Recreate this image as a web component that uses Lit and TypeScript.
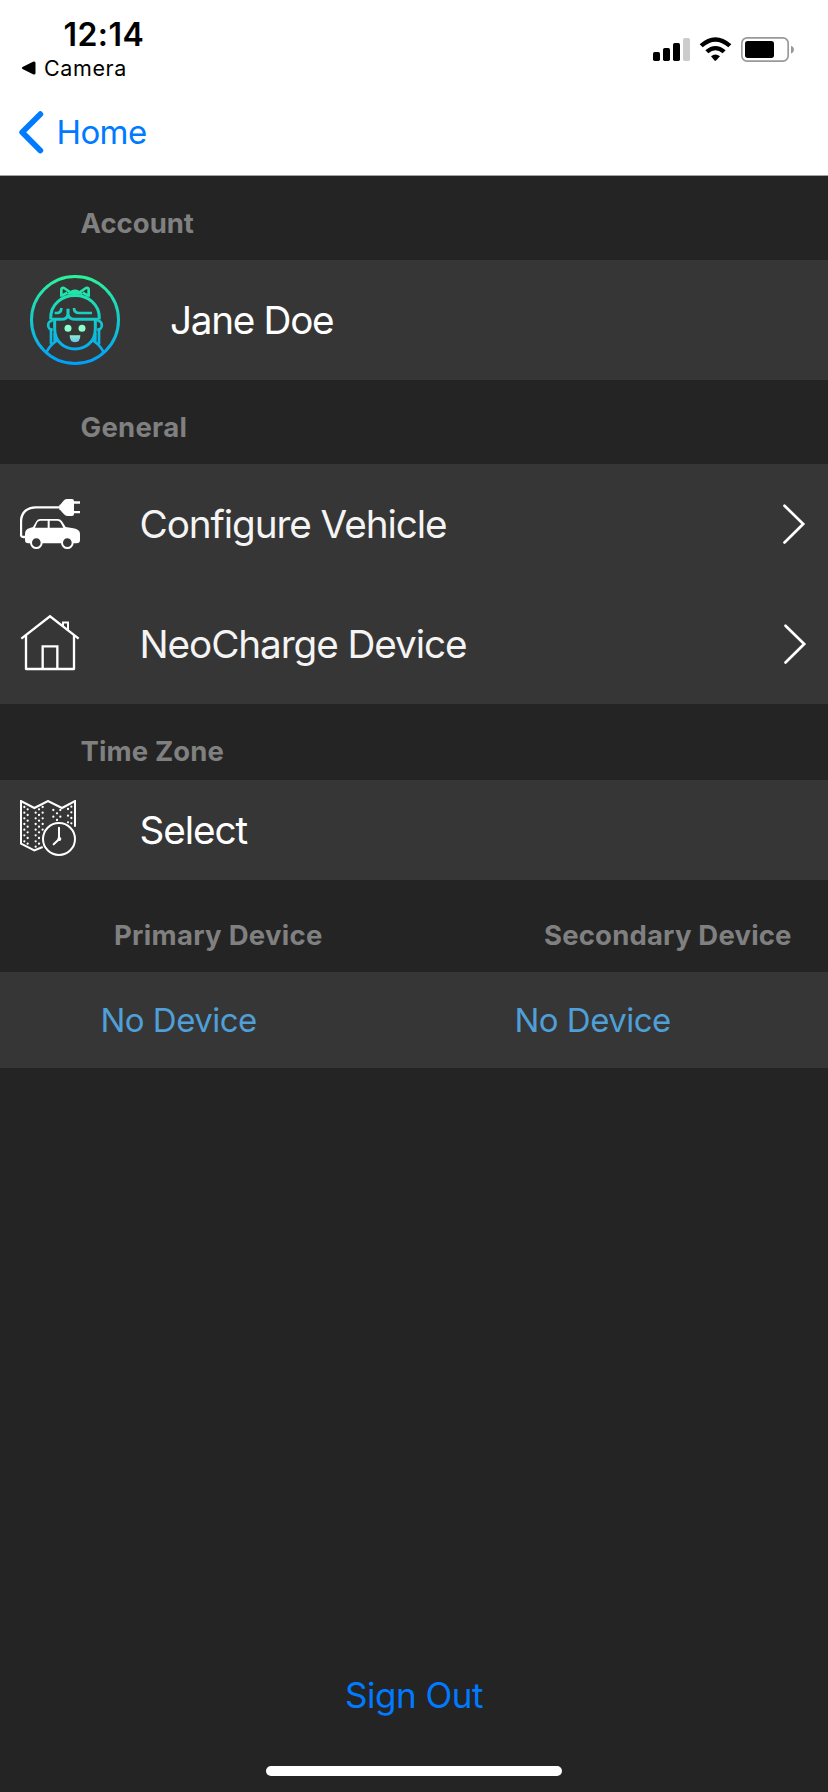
import { LitElement, html, css, svg } from "lit";
import { customElement } from "lit/decorators.js";

const dots: [number, number][] = [
  [43, 81], [53, 88], [43, 98], [53, 105], [43, 115], [53, 122], [43, 132], [53, 140],
  [43, 149], [53, 157], [43, 166], [53, 174], [43, 184], [53, 191],
  [98, 81], [87, 88], [77, 98], [98, 98], [87, 105], [77, 115], [98, 115], [87, 122], [77, 132],
  [98, 132], [87, 140], [77, 149], [98, 149], [87, 157], [77, 166], [87, 174], [77, 184], [87, 191], [77, 200],
  [130, 90], [151, 90], [141, 100], [130, 110], [151, 110], [141, 120],
  [184, 80], [174, 87], [184, 97], [174, 107], [184, 114], [174, 127], [184, 130],
];

const signalIcon = html`
  <svg class="signal" viewBox="93 99 435 93" aria-hidden="true">
    <rect x="99" y="156" width="21" height="27" rx="5" />
    <rect x="129" y="144" width="21" height="39" rx="5" />
    <rect x="159" y="129" width="21" height="54" rx="5" />
    <rect x="189" y="114" width="21" height="69" rx="5" fill="#cccccc" />
    <path d="M239 133Q286 91 334 133L325 142Q286 108 248 142Z" />
    <path d="M256 151Q286 125 317 151L308 160Q286 142 265 160Z" />
    <path d="M273 169Q286 158 300 169L289 181Q286 184 283 181Z" />
    <rect x="365.5" y="113.500" width="139" height="70" rx="16" fill="none" stroke="#999999" stroke-width="5" />
    <rect x="375" y="123" width="87" height="51" rx="8" />
    <path d="M513 137Q522 140 522 149Q522 157 513 161Z" fill="#999999" />
  </svg>`;

const avatarIcon = html`
  <svg class="avatar" viewBox="30 30 270 270" aria-hidden="true">
    <defs>
      <linearGradient id="ring" gradientUnits="userSpaceOnUse" x1="0" y1="30" x2="0" y2="300">
        <stop offset="0" stop-color="#2af598" />
        <stop offset="1" stop-color="#009efd" />
      </linearGradient>
      <linearGradient id="smile" gradientUnits="userSpaceOnUse" x1="0" y1="208" x2="0" y2="233">
        <stop offset="0" stop-color="#8cf5c4" />
        <stop offset="1" stop-color="#6fbcf5" />
      </linearGradient>
    </defs>
    <g fill="none" stroke="url(#ring)" stroke-width="9" stroke-linejoin="round">
      <circle cx="165" cy="165" r="130.500" />
      <path d="M92 163C88 68 242 68 238 163" />
      <path d="M124 95V75Q124 66 132 69L150 81M206 95V75Q206 66 198 69L180 81M126 92L142 83M204 92L188 83" stroke-width="8" />
      <path d="M144 87Q165 66 186 87Z" fill="url(#ring)" stroke-width="5" />
      <path d="M94 163H122Q144 163 144 146V131M144 146Q144 163 169 163H236" />
      <path d="M104 144H110Q124 144 124 129M162 129Q162 144 178 144H216" stroke-width="8" />
      <path d="M104 163V191C104 272 226 272 226 191V163" />
      <path d="M98 167C80 167 80 194 98 194M232 167C250 167 250 194 232 194" stroke-width="8" />
      <path d="M93 190V238M237 190V238M104 205V229M226 205V229M80 260C87 247 94 236 112 226M250 260C243 247 236 236 218 226" stroke-width="8" />
    </g>
    <circle cx="144" cy="190" r="10.500" fill="#8bffce" />
    <circle cx="186" cy="190" r="10.500" fill="#8bffce" />
    <path d="M149 211H181Q181 232 165 232T149 211Z" fill="url(#smile)" />
  </svg>`;

const carIcon = html`
  <svg class="icon" viewBox="30 42 180 180" aria-hidden="true">
    <path d="M48 171H40Q33 171 33 164V126C33 98 51 82 77 82H152" fill="none" stroke="#fff" stroke-width="7" />
    <path d="M148 75Q153 73 155 69L162 61Q166 57 172 57H186Q192 57 192 63V102Q192 108 186 108H172Q166 108 162 103L155 95Q153 91 148 89Z" fill="#fff" />
    <path d="M191 67.500H210M191 96.500H210" stroke="#fff" stroke-width="7" />
    <path fill="#fff" fill-rule="evenodd" d="M45 162Q45 147 60 144L69 141L79 124Q83 117 91 117H143Q151 117 156 124L167 141L190 145Q210 149 210 161V181Q210 190 200 190H55Q45 190 45 180ZM75 143H113V122H91Q85 122 82 127ZM119 143H160L152 128Q148 122 142 122H119Z" />
    <circle cx="79" cy="188" r="16" fill="#363636" stroke="#fff" stroke-width="6" />
    <circle cx="172" cy="188" r="16" fill="#363636" stroke="#fff" stroke-width="6" />
  </svg>`;

const houseIcon = html`
  <svg class="icon" viewBox="30 42 180 180" aria-hidden="true">
    <g fill="none" stroke="#fff" stroke-width="7">
      <path d="M34 116L120 49L206 116" />
      <path d="M48 106V207H192V106" stroke-linejoin="round" />
      <path d="M98 207V139H142V207" />
      <path d="M159 78V67.500H174V91" stroke-width="6" />
    </g>
  </svg>`;

const zoneIcon = html`
  <svg class="icon" viewBox="30 60 180 180" aria-hidden="true">
    <path d="M98 201L73 211L33 191V63L73 84L114 63L156 84L195 63V140" fill="none" stroke="#fff" stroke-width="6" />
    ${dots.map(([x, y]) => svg`<circle cx=${x} cy=${y} r="3.4" fill="#fff" />`)}
    <circle cx="147" cy="177" r="53" fill="#363636" />
    <circle cx="147" cy="177" r="48" fill="none" stroke="#fff" stroke-width="6" />
    <path d="M147 143V178L131 193" fill="none" stroke="#fff" stroke-width="6" stroke-linecap="round" />
    <circle cx="148" cy="177" r="6" fill="#fff" />
  </svg>`;

const chevron = html`
  <svg class="chevron" viewBox="0 0 24 44" aria-hidden="true">
    <path d="M2.500 3.700L21.200 22L2.500 40.500" fill="none" stroke="#fff" stroke-width="2.700" stroke-linecap="round" />
  </svg>`;

@customElement("app-root")
export class AppRoot extends LitElement {
  static styles = css`
    :host {
      display: flex;
      flex-direction: column;
      width: 828px;
      height: 1792px;
      overflow: hidden;
      background: #242424;
      font-family: Inter, "Liberation Sans", sans-serif;
      color: #f4f4f4;
      white-space: nowrap;
    }
    svg { display: block; flex: none; }
    .top {
      box-sizing: border-box;
      height: 176px;
      background: #fff;
      color: #000;
      border-bottom: 1px solid #a2a2a2;
    }
    .status { display: flex; justify-content: space-between; height: 88px; }
    .clock { display: flex; flex-direction: column; padding-top: 14px; }
    .time { padding-left: 63.5px; font-size: 32px; font-weight: 600; line-height: 41px; letter-spacing: 0.45px; }
    .back-app { display: flex; align-items: center; gap: 8px; height: 26px; padding-left: 21px; font-size: 21.5px; letter-spacing: 0.6px; }
    .triangle { width: 15px; height: 14px; }
    .signal { width: 145px; height: 31px; margin: 33px 32px 0 0; }
    .nav { display: flex; align-items: center; height: 88px; padding-left: 18px; color: #007aff; font-size: 33px; letter-spacing: -0.6px; }
    .back { width: 26px; height: 44px; margin-right: 12.5px; }
    .section {
      box-sizing: border-box;
      display: flex;
      align-items: center;
      height: 84px;
      padding: 10px 0 0 80.5px;
      color: #808080;
      font-size: 27.5px;
      font-weight: 700;
      letter-spacing: 0.27px;
    }
    .zone { height: 76px; padding-top: 18px; letter-spacing: 0.12px; }
    .account { letter-spacing: 0; }
    .devices { height: 92px; padding: 18px 0 0; }
    .row { display: flex; align-items: center; height: 120px; background: #363636; font-size: 38.7px; }
    .profile { padding-left: 30px; color: #fff; letter-spacing: -1.3px; }
    .avatar { width: 90px; height: 90px; margin-right: 50px; }
    .item { padding-left: 20px; letter-spacing: -1.09px; }
    .icon { width: 60px; height: 60px; margin-right: 59.5px; }
    .chevron { width: 24px; height: 44px; margin: 0 22px 0 auto; }
    .item + .item .chevron { margin-right: 21px; }
    .short { height: 100px; color: #fff; }
    .pair { height: 96px; color: #4f9fd8; font-size: 33px; letter-spacing: -0.53px; }
    .devices, .pair { display: grid; grid-template-columns: 1fr 1fr; }
    .primary { padding-left: 114px; letter-spacing: 0.28px; }
    .secondary { padding-left: 130px; letter-spacing: 0.18px; }
    .first { padding-left: 100.5px; }
    .second { padding-left: 100.5px; }
    .footer { margin-top: auto; display: flex; flex-direction: column; align-items: center; }
    .signout { color: #007aff; font-size: 35px; line-height: 44px; letter-spacing: -0.48px; margin-bottom: 49px; }
    .indicator { width: 296px; height: 10px; border-radius: 5px; background: #fff; margin-bottom: 16px; }
  `;

  render() {
    return html`
      <header class="top">
        <div class="status">
          <div class="clock">
            <div class="time">12:14</div>
            <div class="back-app">
              <svg class="triangle" viewBox="0 0 15 14" aria-hidden="true">
                <path d="M1.500 6L12.500 0.500Q14.500 0 14.500 2V12Q14.500 14 12.500 13.500L1.500 8Q0 7 1.500 6Z" />
              </svg>
              <span>Camera</span>
            </div>
          </div>
          ${signalIcon}
        </div>
        <nav class="nav">
          <svg class="back" viewBox="0 0 26 44" aria-hidden="true">
            <path d="M22.300 4.200L4.200 22.200L22.300 40.500" fill="none" stroke="#007aff" stroke-width="5.800" stroke-linecap="round" stroke-linejoin="round" />
          </svg>
          <span>Home</span>
        </nav>
      </header>
      <div class="section account">Account</div>
      <div class="row profile">${avatarIcon}<span>Jane Doe</span></div>
      <div class="section">General</div>
      <div class="row item">${carIcon}<span>Configure Vehicle</span>${chevron}</div>
      <div class="row item">${houseIcon}<span>NeoCharge Device</span>${chevron}</div>
      <div class="section zone">Time Zone</div>
      <div class="row item short">${zoneIcon}<span>Select</span></div>
      <div class="section devices">
        <div class="primary">Primary Device</div>
        <div class="secondary">Secondary Device</div>
      </div>
      <div class="row pair">
        <div class="first">No Device</div>
        <div class="second">No Device</div>
      </div>
      <footer class="footer">
        <div class="signout">Sign Out</div>
        <div class="indicator"></div>
      </footer>
    `;
  }
}
